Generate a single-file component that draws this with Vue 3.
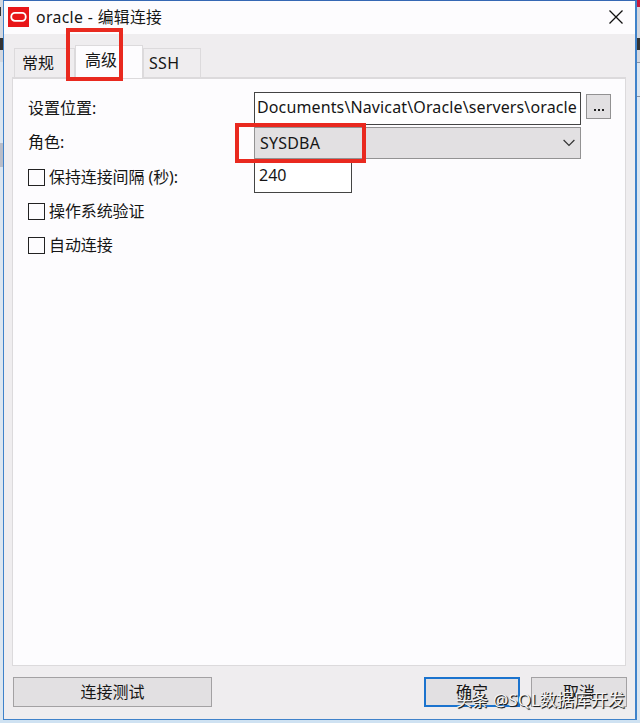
<template>
  <div class="screen">
    <!-- 窗口后面露出的背景 -->
    <div class="behind left">
      <i class="mark m1"></i>
      <i class="mark m2"></i>
      <i class="mark m3"></i>
    </div>
    <div class="behind right">
      <i class="red"></i>
      <i class="mark m2"></i>
      <i class="mark m4"></i>
      <i class="mark m5"></i>
    </div>

    <div class="dialog">
      <!-- 标题栏 -->
      <header class="title-bar">
        <svg class="logo" width="21" height="20" viewBox="0 0 21 20">
          <rect width="21" height="20" fill="#e81518" />
          <rect x="3.3" y="5.8" width="14.4" height="8" rx="3.6" fill="none" stroke="#fff" stroke-width="1.8" />
        </svg>
        <h1>oracle - 编辑连接</h1>
        <button class="close-btn" aria-label="关闭">
          <svg width="14" height="14" viewBox="0 0 14 14">
            <path d="M.5 .5 13.5 13.5M13.5 .5 .5 13.5" fill="none" stroke="#111" stroke-width="1.3" />
          </svg>
        </button>
      </header>

      <!-- 标签页 -->
      <nav class="tabs">
        <button
          v-for="tab in tabs"
          :key="tab.id"
          class="tab"
          :class="[tab.id, { active: tab.id === current }]"
          @click="current = tab.id"
        >
          <span>{{ tab.label }}</span>
          <i v-if="tab.id === 'advanced'" class="highlight tab-highlight"></i>
        </button>
      </nav>

      <!-- 高级设置 -->
      <main class="panel">
        <div class="row">
          <label class="label">设置位置:</label>
          <div class="input path"><span>Documents\Navicat\Oracle\servers\oracle</span></div>
          <button class="browse"><i></i><i></i><i></i></button>
        </div>
        <div class="row">
          <label class="label">角色:</label>
          <div class="select">
            <span>{{ role }}</span>
            <svg width="12" height="8" viewBox="0 0 12 8">
              <path d="M.6 1 6 6.4 11.4 1" fill="none" stroke="#333" stroke-width="1.2" />
            </svg>
            <i class="highlight role-highlight"></i>
          </div>
        </div>
        <div class="row">
          <label class="label check" @click="keepAlive = !keepAlive">
            <i class="box" :class="{ on: keepAlive }"></i>保持连接间隔 (秒):
          </label>
          <div class="input interval"><span>240</span></div>
        </div>
        <div class="row">
          <label class="label check" @click="osAuth = !osAuth">
            <i class="box" :class="{ on: osAuth }"></i>操作系统验证
          </label>
        </div>
        <div class="row">
          <label class="label check" @click="autoConnect = !autoConnect">
            <i class="box" :class="{ on: autoConnect }"></i>自动连接
          </label>
        </div>
      </main>

      <!-- 底部按钮 -->
      <footer class="actions">
        <button class="btn test">连接测试</button>
        <button class="btn ok">确定</button>
        <button class="btn cancel">取消</button>
      </footer>
    </div>

    <div class="watermark"><span>头条</span><span class="author">@SQL数据库开发</span></div>
  </div>
</template>

<script setup>
import { ref } from 'vue'

const tabs = [
  { id: 'general', label: '常规' },
  { id: 'advanced', label: '高级' },
  { id: 'ssh', label: 'SSH' }
]

const current = ref('advanced')
const role = ref('SYSDBA')
const keepAlive = ref(false)
const osAuth = ref(false)
const autoConnect = ref(false)
</script>

<style>
body {
  margin: 0;
  overflow: hidden;
}
</style>

<style scoped>
* {
  box-sizing: border-box;
}

.screen {
  position: relative;
  width: 640px;
  height: 723px;
  padding: 0 3px 3px;
  background: #cfe2f2;
  color: #161616;
  font-family: 'Noto Sans', 'Noto Sans CJK SC', sans-serif;
  font-size: 16px;
  overflow: hidden;
}

button {
  padding: 0;
  border: 0;
  background: none;
  color: inherit;
  font: inherit;
}

/* 背景窗口边缘 */
.behind {
  position: absolute;
  top: 0;
  width: 3px;
  height: 720px;
  background: linear-gradient(#d3d7df 0 62px, #dce6f0 62px);
}

.left {
  left: 0;
}

.right {
  right: 0;
}

.mark {
  position: absolute;
  left: 0;
  width: 3px;
  background: #333;
}

.m1 {
  top: 7px;
  height: 9px;
  width: 1px;
}

.m2 {
  top: 38px;
  height: 12px;
}

.m3 {
  top: 143px;
  height: 24px;
  background: #b9bdc8;
}

.m4 {
  top: 62px;
  height: 1px;
  background: #8a93a3;
}

.m5 {
  top: 96px;
  height: 1px;
  background: #8a93a3;
}

.red {
  position: absolute;
  top: 0;
  left: 0;
  width: 3px;
  height: 7px;
  background: #c9173b;
}

.dialog {
  position: relative;
  display: flex;
  flex-direction: column;
  width: 634px;
  height: 720px;
  border: 1px solid #3f82ca;
  border-top-color: #3568b4;
  border-right-width: 2px;
  background: #efedef;
}

/* 标题栏 */
.title-bar {
  display: flex;
  align-items: center;
  height: 33px;
  padding: 0 12px 0 4px;
  background: #fdfcfe;
}

.logo {
  margin-top: -2px;
}

h1 {
  flex: 1;
  margin: -2px 0 0 7px;
  font-size: 15.8px;
  font-weight: 400;
  line-height: 32px;
  letter-spacing: 0.35px;
}

.close-btn {
  width: 14px;
  height: 14px;
  margin-top: -1px;
}

.close-btn svg {
  display: block;
}

/* 标签页 */
.tabs {
  display: flex;
  align-items: flex-end;
  height: 43px;
  padding-left: 10px;
}

.tab {
  position: relative;
  width: 61px;
  height: 29px;
  border: 1px solid #dcdadc;
  border-bottom: 0;
  text-align: left;
  line-height: 26px;
}

.general {
  padding-left: 7px;
}

.advanced {
  padding-left: 9px;
}

.ssh {
  width: 58px;
  padding-left: 5px;
  letter-spacing: 0.3px;
}

.active {
  z-index: 2;
  width: 68px;
  height: 33px;
  margin-bottom: -1px;
  padding-bottom: 5px;
  background: #fdfcfe;
}

.highlight {
  position: absolute;
  border: 4px solid #e9291f;
}

.tab-highlight {
  top: -18px;
  left: -10px;
  width: 57px;
  height: 53px;
}

/* 设置面板 */
.panel {
  width: 614px;
  height: 589px;
  margin-left: 8px;
  padding: 14px 0 0 15px;
  border: 1px solid #dcdadc;
  border-top-width: 2px;
  padding-top: 13px;
  background: #fdfcfe;
}

.row {
  display: flex;
  height: 34.1px;
}

.label {
  width: 226px;
  line-height: 33px;
  white-space: nowrap;
}

.check {
  display: flex;
  align-items: center;
  letter-spacing: -0.1px;
}

.box {
  width: 17px;
  height: 17px;
  margin-right: 4px;
  border: 1px solid #222;
}

.on {
  background: #222;
  box-shadow: inset 0 0 0 3px #fff;
}

.input {
  height: 33px;
  border: 1px solid #444;
  background: #fff;
  line-height: 29px;
}

.path {
  display: flex;
  justify-content: flex-end;
  width: 327px;
  padding-right: 3px;
  letter-spacing: 0.13px;
  overflow: hidden;
  white-space: nowrap;
}

.interval {
  width: 98px;
  padding-left: 4px;
}

.browse {
  display: flex;
  justify-content: center;
  align-items: center;
  gap: 2px;
  width: 25px;
  height: 25px;
  margin: 2px 0 0 5px;
  padding-top: 7px;
  border: 1px solid #929192;
  background: #e2e0e2;
}

.browse i {
  width: 2px;
  height: 2px;
  background: #222;
}

.select {
  position: relative;
  display: flex;
  justify-content: space-between;
  align-items: center;
  width: 327px;
  height: 32px;
  margin-top: 1px;
  padding: 0 5px;
  border: 1px solid #939293;
  background: #e2e0e2;
  letter-spacing: 0.2px;
}

.role-highlight {
  top: -5px;
  left: -20px;
  width: 131px;
  height: 40px;
}

/* 底部按钮 */
.actions {
  display: flex;
  padding: 11px 0 0 9px;
}

.btn {
  height: 30px;
  border: 1px solid #a3a1a3;
  background: #e2e0e2;
  line-height: 28px;
}

.test {
  width: 199px;
  margin-right: auto;
}

.ok {
  width: 96px;
  margin-right: 11px;
  border: 2px solid #1b73ce;
  line-height: 26px;
}

.cancel {
  width: 96px;
  margin-right: 8px;
}

/* 右下角水印 */
.watermark {
  position: absolute;
  top: 688px;
  left: 456px;
  display: flex;
  gap: 5px;
  color: #f4f3f4;
  font-size: 16px;
  line-height: 24px;
  white-space: nowrap;
  text-shadow: 1px 1px 0 #222, 1px 1px 1px #444;
}

.author {
  font-size: 17px;
}
</style>
